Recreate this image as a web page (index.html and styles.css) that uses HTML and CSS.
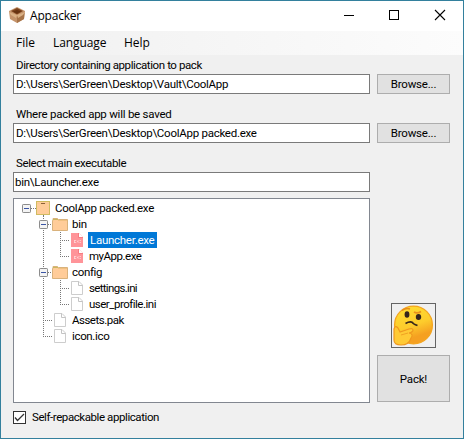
FILE: index.html
```html
<!DOCTYPE html>
<html lang="en">
<head>
<meta charset="utf-8">
<title>Appacker</title>
<link rel="stylesheet" href="styles.css">
</head>
<body>
<svg class="sprites" width="0" height="0">
  <defs>
    <symbol id="toggle" viewBox="0 0 9 9"><rect x=".5" y=".5" width="8" height="8" rx=".7" fill="#f4f4f4" stroke="#8c8c8c"/><path d="M2 4.500h5" stroke="#3a55a5"/></symbol>
    <symbol id="package" viewBox="0 0 14 14"><rect x=".5" y=".5" width="13" height="13" fill="#fc9" stroke="#d0bb60"/><path d="M1 2.500h12" stroke="#f8c892"/><path d="M5 2.500h4" stroke="#8b6038"/></symbol>
    <symbol id="folder" viewBox="0 0 16 13"><path d="M.5 12.500V2.500H1V.5H5.500L6.500 1.500H15.500V12.500Z" fill="#fc9" stroke="#d9b27c"/><path d="M1 1.500H6" stroke="#c9b860"/><path d="M6 2.500h9" stroke="#f0c080"/></symbol>
    <symbol id="file" viewBox="0 0 12 14"><path d="M.5.5H8L11.500 4V13.500H.5Z" fill="#fff" stroke="#cdcdcd"/><path d="M7.500.5V4.500H11.500" fill="none" stroke="#c4c4c4"/></symbol>
    <symbol id="exe" viewBox="0 0 12 14"><path d="M0 0H8L12 4V14H0Z" fill="#ff9499"/><path d="M8 0V4H12Z" fill="#fff"/><path d="M7.500 0V4.500H12" fill="none" stroke="#f77b82"/><path d="M3 7.500H5M3 9.500H5M3.500 7V10M6 7.500L7.500 9.500M7.500 7.500L6 9.500M8.500 7.500H10M8.500 9.500H10" stroke="#ffd5d7" stroke-width=".8"/></symbol>
  </defs>
</svg>
<div class="window">
  <header class="titlebar">
    <svg class="logo" width="16" height="16" viewBox="0 0 16 16">
      <path d="M0 4L8 0L16 4L15 12L8 16L1 12Z" fill="#c4936a"/>
      <path d="M2 4L8 1L14 4L8 7.500Z" fill="#7c431d"/><path d="M4 4.500L8 3L12 4.500L8 6.500Z" fill="#653211"/>
      <path d="M8 9L15.500 6L15 12L8 16Z" fill="#a77449"/>
      <path d="M0 5L2 8L7 11L8 8L9 11L14 8L16 5L8 8Z" fill="#dab185"/>
    </svg>
    <span class="title">Appacker</span>
    <svg class="controls" width="104" height="12" viewBox="0 0 104 12"><path d="M0 6.500H10" stroke="#000"/><rect x="45.500" y="1.500" width="9" height="9" fill="none" stroke="#000"/><path d="M91 1L101 11M101 1L91 11" stroke="#000" stroke-width="1.100"/></svg>
  </header>
  <nav class="menu"><span class="m1">File</span><span class="m2">Language</span><span class="m3">Help</span></nav>
  <main>
    <label class="l1">Directory containing application to pack</label>
    <div class="row"><div class="field f1">D:\Users\SerGreen\Desktop\Vault\CoolApp</div><button>Browse...</button></div>
    <label class="l2">Where packed app will be saved</label>
    <div class="row"><div class="field f2">D:\Users\SerGreen\Desktop\CoolApp packed.exe</div><button>Browse...</button></div>
    <label class="l3">Select main executable</label>
    <div class="row"><div class="field f3">bin\Launcher.exe</div></div>
    <div class="lower">
      <div class="tree">
        <div class="node"><svg width="39" height="16"><path class="dots" d="M17 8.500H22M29.500 15V16"/><use href="#toggle" x="8" y="4" width="9" height="9"/><use href="#package" x="22" y="1" width="14" height="14"/></svg><span class="n0">CoolApp packed.exe</span></div>
        <div class="node"><svg width="56" height="16"><path class="dots" d="M29.500 0V16M34 8.500H38"/><use href="#toggle" x="25" y="4" width="9" height="9"/><use href="#folder" x="38" y="2" width="16" height="13"/></svg><span class="n1">bin</span></div>
        <div class="node"><svg width="74" height="16"><path class="dots" d="M29.500 0V16M46.500 0V16M46 8.500H56"/><use href="#exe" x="57" y="1" width="12" height="14"/></svg><span class="n2 selected">Launcher.exe</span></div>
        <div class="node"><svg width="74" height="16"><path class="dots" d="M29.500 0V16M46.500 0V8M46 8.500H56"/><use href="#exe" x="57" y="1" width="12" height="14"/></svg><span class="n3">myApp.exe</span></div>
        <div class="node"><svg width="56" height="16"><path class="dots" d="M29.500 0V16M34 8.500H38"/><use href="#toggle" x="25" y="4" width="9" height="9"/><use href="#folder" x="38" y="2" width="16" height="13"/></svg><span class="n4">config</span></div>
        <div class="node"><svg width="74" height="16"><path class="dots" d="M29.500 0V16M46.500 0V16M46 8.500H56"/><use href="#file" x="57" y="1" width="12" height="14"/></svg><span class="n5">settings.ini</span></div>
        <div class="node"><svg width="74" height="16"><path class="dots" d="M29.500 0V16M46.500 0V8M46 8.500H56"/><use href="#file" x="57" y="1" width="12" height="14"/></svg><span class="n6">user_profile.ini</span></div>
        <div class="node"><svg width="56" height="16"><path class="dots" d="M29.500 0V16M29 8.500H39"/><use href="#file" x="40" y="1" width="12" height="14"/></svg><span class="n7">Assets.pak</span></div>
        <div class="node"><svg width="56" height="16"><path class="dots" d="M29.500 0V8M29 8.500H39"/><use href="#file" x="40" y="1" width="12" height="14"/></svg><span class="n8">icon.ico</span></div>
      </div>
      <div class="side">
        <div class="picture">
          <svg width="43" height="43" viewBox="0 0 43 43">
            <defs><linearGradient id="face" x1="0" y1="0" x2=".35" y2="1"><stop stop-color="#ffdf32"/><stop offset=".6" stop-color="#fdcc2c"/><stop offset=".9" stop-color="#f5a021"/></linearGradient></defs>
            <circle cx="21.500" cy="21" r="18.900" fill="url(#face)" stroke="#f4a51f" stroke-width="1.300"/>
            <path d="M10 6.500Q14 3.500 18 5" fill="none" stroke="#e78b1c" stroke-width="1.500"/>
            <path d="M22 8Q25 10 29 7.500" fill="none" stroke="#e9901d" stroke-width="1.700"/>
            <ellipse cx="15" cy="10.500" rx="2.400" ry="3.300" fill="#35251c"/><ellipse cx="26.500" cy="13" rx="2.700" ry="3" fill="#35251c"/>
            <path d="M13.500 19.500Q18 17 20.500 18.500Q21 20 25.500 21.500" fill="none" stroke="#3b281a" stroke-width="1.700"/>
            <path d="M2 25Q3 21 6 24L8 28L17 25Q21 24 21 26Q21 28 17 29Q22 30 19 34Q17 41 9 41Q2 41 2 36Z" fill="#ffca35" stroke="#ef981e" stroke-width="1.200"/>
            <path d="M9 31L16 29" fill="none" stroke="#f1a322"/>
          </svg>
        </div>
        <button class="pack">Pack!</button>
      </div>
    </div>
    <div class="option"><svg width="13" height="13" viewBox="0 0 13 13"><rect x=".5" y=".5" width="12" height="12" fill="#fff" stroke="#333"/><path d="M2 6.500L4.500 9.500L11 3" fill="none" stroke="#333" stroke-width="1.300"/></svg><span class="opt">Self-repackable application</span></div>
  </main>
</div>
</body>
</html>
```
FILE: styles.css
```css
* { box-sizing: border-box; }
body { margin: 0; font: 11.5px/16px Roboto, "Liberation Sans", sans-serif; color: #000; }
.sprites { display: block; }
.window { width: 464px; height: 439px; border: 1px solid #33809d; background: #f0f0f0; overflow: hidden; white-space: nowrap; }
.titlebar { height: 30px; background: #fff; display: flex; align-items: center; padding: 0 15px 0 8px; }
.logo { margin-top: -2px; }
.title { flex: 1; margin-left: 5px; font: 12px/16px "Open Sans", sans-serif; letter-spacing: -.2px; }
.controls { margin-top: -2px; }
.menu { height: 24px; display: flex; padding-left: 15px; background: linear-gradient(90deg, #f0f0f0, #fcfcfc); font: 12px/24px "Open Sans", sans-serif; }
.m1 { width: 37px; }
.m2 { width: 71px; letter-spacing: -.1px; }
main { padding: 3px 13px 0 12px; }
label { display: block; height: 16px; padding-left: 3px; line-height: 15px; }
.row { display: flex; gap: 7px; margin-bottom: 13px; }
.field { width: 357px; height: 20px; border: 1px solid #7a7a7a; background: #fff; padding-left: 2px; line-height: 19px; letter-spacing: -.26px; }
.f3 { padding-left: 1px; }
button { width: 73px; height: 20px; border: 1px solid #adadad; background: #e1e1e1; padding: 0; font: inherit; line-height: 18px; letter-spacing: -.2px; color: #000; }
.l1 { letter-spacing: -.41px; }
.l2 { letter-spacing: -.24px; }
.l3 { letter-spacing: -.37px; }
.lower { display: flex; gap: 7px; margin-top: -7px; }
.tree { width: 357px; height: 205px; border: 1px solid #828790; background: #fff; padding-top: 1px; }
.node { display: flex; height: 16px; }
.node span { padding: 0 2px; line-height: 17px; }
.n0 { letter-spacing: -.31px; }
.n1 { letter-spacing: -.2px; }
.n2 { letter-spacing: -.27px; }
.n3 { letter-spacing: -.48px; }
.n4 { letter-spacing: -.35px; }
.n5 { letter-spacing: -.68px; }
.n6 { letter-spacing: -.5px; }
.n7 { letter-spacing: -.5px; }
.n8 { letter-spacing: -.34px; }
.node .n3, .node .n5, .node .n6 { padding-left: 1px; }
.dots { stroke: #777; stroke-dasharray: 1 1; fill: none; }
.selected { width: 69px; background: #0078d7; color: #fff; }
.side { display: flex; flex-direction: column; align-items: center; justify-content: flex-end; padding-bottom: 1px; }
.picture { width: 45px; height: 45px; border: 1px solid #646464; margin-bottom: 7px; }
.picture svg { display: block; }
.pack { height: 47px; }
.option { display: flex; align-items: center; gap: 6px; margin-top: 5px; }
.opt { padding-top: 1px; letter-spacing: -.42px; }
.option svg { margin-top: 1px; }
```
